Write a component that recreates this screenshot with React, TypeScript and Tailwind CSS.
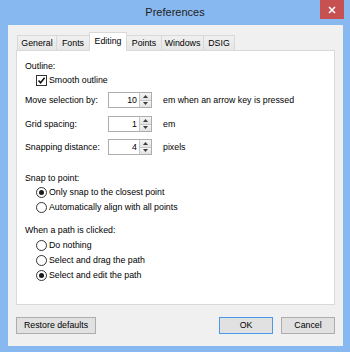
import React from "react";

function Checkbox({ checked }: { checked: boolean }) {
  return (
    <div className="w-[11px] h-[11px] border border-[#333333] bg-white flex items-center justify-center shrink-0">
      {checked && (
        <svg width="9" height="9" viewBox="0 0 9 9">
          <path d="M1.5 4.5 L3.6 6.8 L7.6 1.8" fill="none" stroke="#111" strokeWidth="1.6" />
        </svg>
      )}
    </div>
  );
}

function Radio({ checked, label }: { checked: boolean; label: string }) {
  return (
    <div className="h-[15px] flex items-center pl-[11px] gap-[2px]">
      <div className="w-[11px] h-[11px] rounded-full border border-[#333333] bg-white flex items-center justify-center shrink-0">
        {checked && <div className="w-[5px] h-[5px] rounded-full bg-[#1a1a1a]" />}
      </div>
      <span>{label}</span>
    </div>
  );
}

function Spin({ v }: { v: string }) {
  return (
    <div className="flex w-[44px] h-[16px] border border-[#abadb3] bg-white shrink-0">
      <div className="flex-1 flex items-center justify-end pr-[2px]">{v}</div>
      <div className="w-[12px] flex flex-col border-l border-[#c5c5c5]">
        <div className="flex-1 flex items-center justify-center bg-gradient-to-b from-[#f6f6f6] to-[#e2e2e2] border-b border-[#c5c5c5]">
          <svg width="5" height="3" viewBox="0 0 5 3">
            <path d="M0 3 L2.5 0 L5 3 Z" fill="#3c3c3c" />
          </svg>
        </div>
        <div className="flex-1 flex items-center justify-center bg-gradient-to-b from-[#f6f6f6] to-[#e2e2e2]">
          <svg width="5" height="3" viewBox="0 0 5 3">
            <path d="M0 0 L2.5 3 L5 0 Z" fill="#3c3c3c" />
          </svg>
        </div>
      </div>
    </div>
  );
}

function SpinRow({ label, v, unit, cls }: { label: string; v: string; unit: string; cls: string }) {
  return (
    <div className={"h-[16px] flex items-center " + cls}>
      <span className="w-[83px] shrink-0">{label}</span>
      <Spin v={v} />
      <span className="ml-[11px]">{unit}</span>
    </div>
  );
}

const tabs = [
  { name: "General", w: "w-[40px]" },
  { name: "Fonts", w: "w-[34px]" },
  { name: "Editing", w: "w-[38px]" },
  { name: "Points", w: "w-[36px]" },
  { name: "Windows", w: "w-[43px]" },
  { name: "DSIG", w: "w-[32px]" },
];

export default function App() {
  return (
    <div className="w-[350px] h-[352px] bg-[#88b8f0] flex flex-col text-[8.8px] leading-none text-black [font-family:'Liberation_Sans',Arial,sans-serif]">
      {/* Title bar */}
      <div className="h-[25px] grid grid-cols-[1fr_auto_1fr] shrink-0">
        <div />
        <div className="text-[11px] leading-[25px] text-[#222222]">Preferences</div>
        <div className="flex justify-end items-start pr-[6px]">
          <div className="w-[24px] h-[19px] bg-[#c75050] flex items-center justify-center">
            <svg width="8" height="8" viewBox="0 0 8 8">
              <path d="M1 1 L7 7 M7 1 L1 7" stroke="#ffffff" strokeWidth="1.6" />
            </svg>
          </div>
        </div>
      </div>

      {/* Client area */}
      <div className="ml-[8px] w-[335px] h-[321px] bg-[#f0f0f0] flex flex-col px-[8px] pt-[8px]">
        {/* Tabs */}
        <div className="flex items-end h-[17px] pl-[1px]">
          {tabs.map((t, i) => {
            const sel = t.name === "Editing";
            return (
              <div
                key={t.name}
                className={
                  t.w +
                  " flex items-center justify-center border-t border-l border-r border-[#d9d9d9] " +
                  (i > 0 ? "-ml-px " : "") +
                  (sel
                    ? "h-[19px] bg-white relative z-10 -mb-px pb-[2px]"
                    : "h-[15px] bg-gradient-to-b from-[#f0f0f0] to-[#e6e6e6]")
                }
              >
                {t.name}
              </div>
            );
          })}
        </div>

        {/* Panel */}
        <div className="border border-[#d9d9d9] bg-white h-[255px] w-[319px] flex flex-col pl-[8px] pt-[9px]">
          <div className="h-[13px] flex items-center">Outline:</div>
          <div className="h-[14px] flex items-center pl-[11px] gap-[2px]">
            <Checkbox checked={true} />
            <span>Smooth outline</span>
          </div>
          <SpinRow label="Move selection by:" v="10" unit="em when an arrow key is pressed" cls="mt-[5px]" />
          <SpinRow label="Grid spacing:" v="1" unit="em" cls="mt-[8px]" />
          <SpinRow label="Snapping distance:" v="4" unit="pixels" cls="mt-[7px]" />

          <div className="h-[14px] flex items-center mt-[16px]">Snap to point:</div>
          <Radio checked={true} label="Only snap to the closest point" />
          <Radio checked={false} label="Automatically align with all points" />

          <div className="h-[14px] flex items-center mt-[8px]">When a path is clicked:</div>
          <div className="mt-[1px]" />
          <Radio checked={false} label="Do nothing" />
          <Radio checked={false} label="Select and drag the path" />
          <Radio checked={true} label="Select and edit the path" />
        </div>

        {/* Buttons */}
        <div className="mt-[12px] flex h-[17px]">
          <div className="w-[80px] h-[17px] bg-[#e1e1e1] border border-[#adadad] flex items-center justify-center">
            Restore defaults
          </div>
          <div className="flex-1" />
          <div className="w-[54px] h-[17px] bg-[#e1e1e1] border border-[#4a98e8] flex items-center justify-center">
            OK
          </div>
          <div className="ml-[8px] w-[54px] h-[17px] bg-[#e1e1e1] border border-[#adadad] flex items-center justify-center">
            Cancel
          </div>
        </div>
      </div>
    </div>
  );
}
